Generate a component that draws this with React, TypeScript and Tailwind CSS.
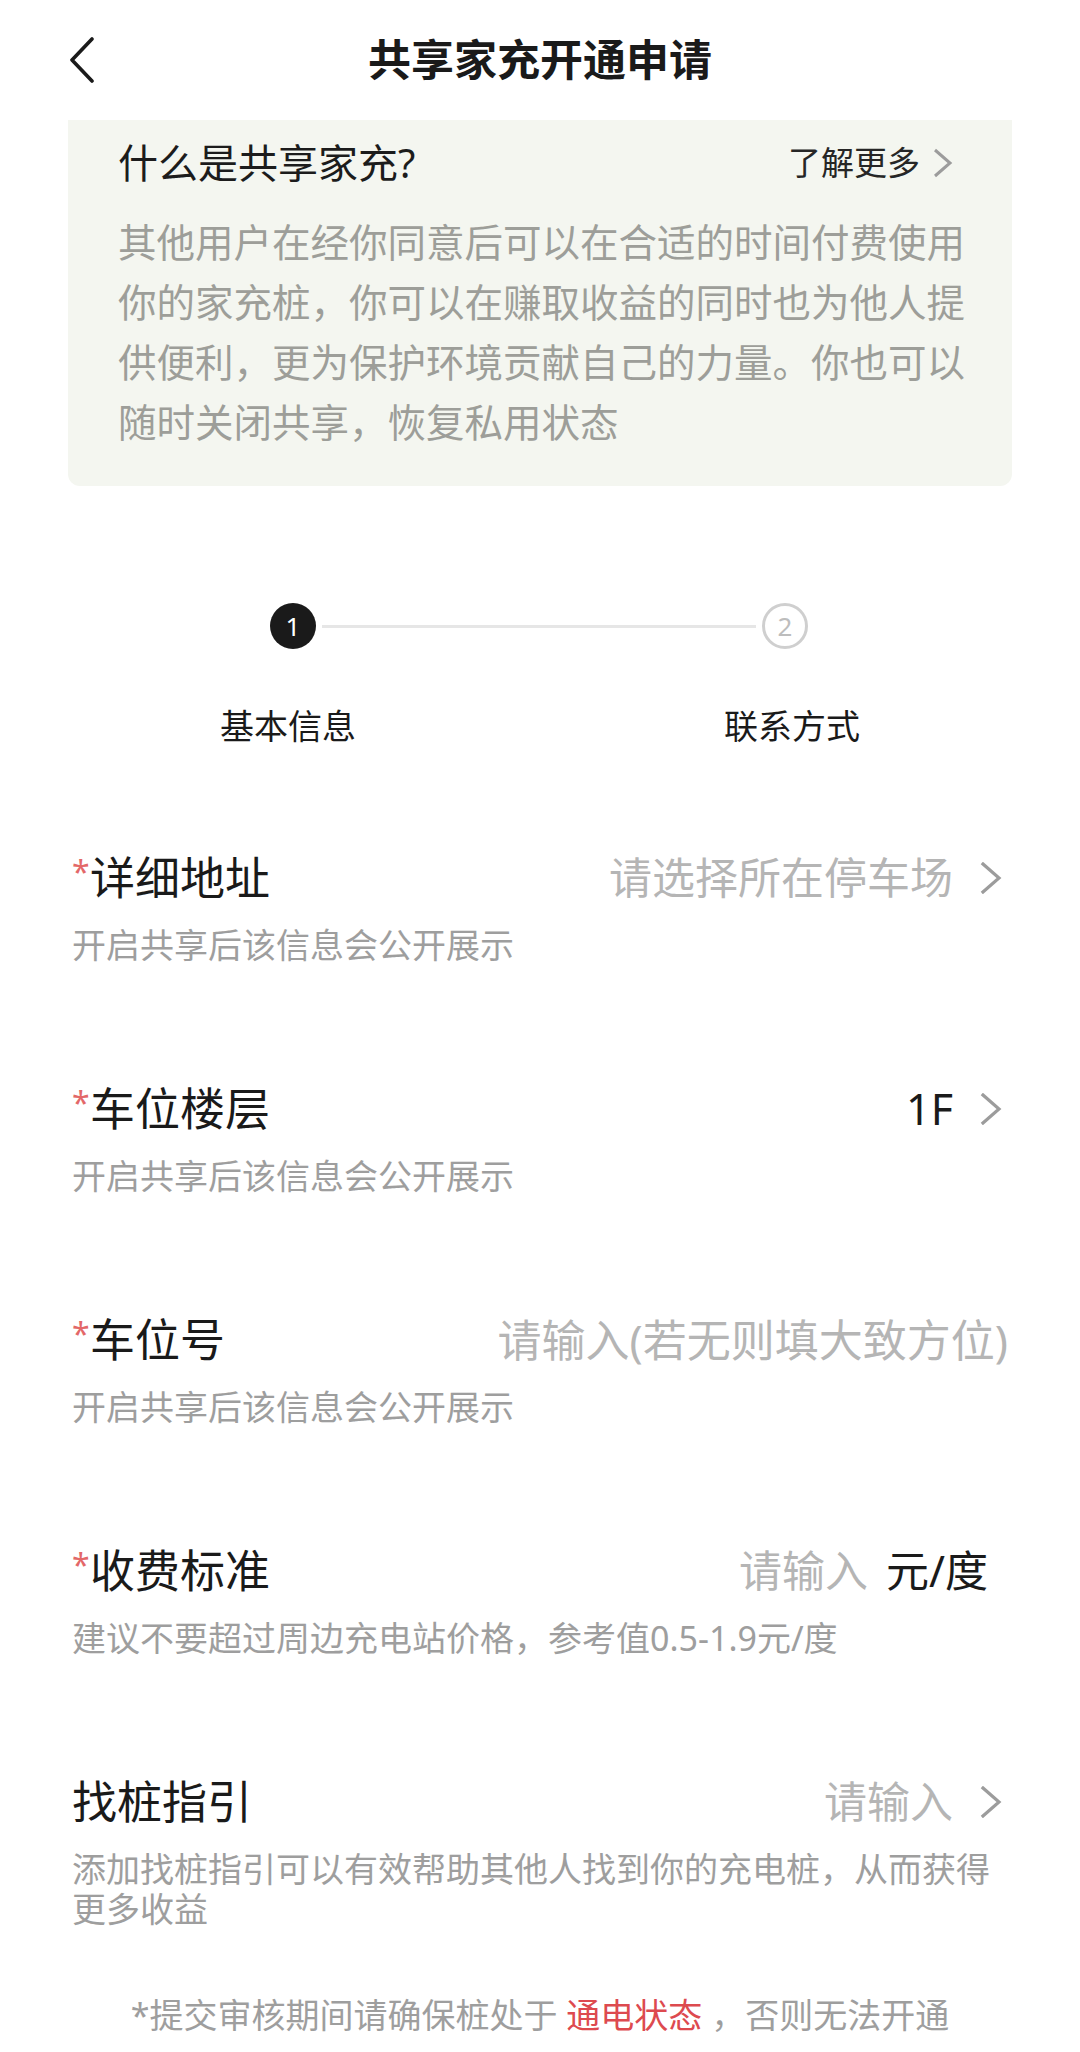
import React from 'react';

const FONT = "font-['Noto_Sans','Noto_Sans_CJK_SC',sans-serif]";

function Chevron({ color = '#9c9c9c', className = '' }: { color?: string; className?: string }) {
  return (
    <svg width="28" height="32" viewBox="0 0 28 32" className={className} fill="none">
      <path d="M3 2 L19 16 L3 30" stroke={color} strokeWidth="3.2" strokeLinecap="square" strokeLinejoin="miter" />
    </svg>
  );
}

interface FieldRowProps {
  label: string;
  required?: boolean;
  hint: React.ReactNode;
  right: React.ReactNode;
}

function FieldRow({ label, required = true, hint, right }: FieldRowProps) {
  return (
    <div className="px-[72px]">
      <div className="flex h-[60px] items-center justify-between">
        <div className="flex items-start">
          {required && (
            <span className="mt-[8px] w-[18px] text-[32px] leading-none text-[#e36868]">*</span>
          )}
          <span className="text-[45px] leading-[60px] text-[#1a1a1a]">{label}</span>
        </div>
        <div className="flex items-center">{right}</div>
      </div>
      <div className="mt-[17px] text-[34px] leading-[40px] text-[#9e9e9e]">{hint}</div>
    </div>
  );
}

const PUBLIC_HINT = '开启共享后该信息会公开展示';

export default function App() {
  return (
    <div className={`${FONT} min-h-[2052px] w-[1080px] overflow-hidden bg-white`}>
      {/* header */}
      <div className="grid h-[120px] grid-cols-[1fr_auto_1fr] items-center px-[68px]">
        <svg width="28" height="46" viewBox="0 0 28 46" fill="none">
          <path d="M24 2 L4 23 L24 44" stroke="#1a1a1a" strokeWidth="3.6" strokeLinecap="round" strokeLinejoin="round" />
        </svg>
        <h1 className="text-[43px] font-bold leading-[60px] text-[#1a1a1a]">共享家充开通申请</h1>
        <div />
      </div>

      {/* intro card */}
      <div className="mx-[68px] rounded-b-[12px] bg-[#f4f6f0] pb-[34px] pl-[50px] pr-[40px] pt-[15px]">
        <div className="flex h-[56px] items-center justify-between pr-[19px]">
          <span className="text-[40px] text-[#1c1c1c]">什么是共享家充?</span>
          <div className="flex items-center">
            <span className="text-[33px] text-[#262626]">了解更多</span>
            <svg width="20" height="30" viewBox="0 0 20 30" fill="none" className="ml-[13px]">
              <path d="M2 2 L17 15 L2 28" stroke="#9c9c9c" strokeWidth="3" />
            </svg>
          </div>
        </div>
        <p className="mt-[21px] text-[38.5px] leading-[60px] text-[#9d9e99]">
          其他用户在经你同意后可以在合适的时间付费使用你的家充桩，你可以在赚取收益的同时也为他人提供便利，更为保护环境贡献自己的力量。你也可以随时关闭共享，恢复私用状态
        </p>
      </div>

      {/* steps */}
      <div className="mt-[117px] flex items-center pl-[270px] pr-[272px]">
        <div className="flex h-[46px] w-[46px] items-center justify-center rounded-full bg-[#1a1a1a] text-[26px] text-white">
          1
        </div>
        <div className="mx-[6px] h-[3px] flex-1 bg-[#e6e6e6]" />
        <div className="flex h-[46px] w-[46px] items-center justify-center rounded-full border-[3px] border-[#cfcfcf] text-[26px] text-[#bdbdbd]">
          2
        </div>
      </div>
      <div className="mt-[53px] flex justify-between px-[220px] text-[34px] leading-[48px] text-[#1a1a1a]">
        <span>基本信息</span>
        <span>联系方式</span>
      </div>

      {/* form */}
      <div className="mt-[98px] flex flex-col gap-[114px]">
        <FieldRow
          label="详细地址"
          hint={PUBLIC_HINT}
          right={
            <>
              <span className="text-[43px] text-[#b5b5b5]">请选择所在停车场</span>
              <Chevron className="ml-[27px]" />
            </>
          }
        />
        <FieldRow
          label="车位楼层"
          hint={PUBLIC_HINT}
          right={
            <>
              <span className="text-[43px] text-[#1a1a1a]">1F</span>
              <Chevron className="ml-[27px]" />
            </>
          }
        />
        <FieldRow
          label="车位号"
          hint={PUBLIC_HINT}
          right={<span className="text-[44px] text-[#b5b5b5]">请输入(若无则填大致方位)</span>}
        />
        <FieldRow
          label="收费标准"
          hint="建议不要超过周边充电站价格，参考值0.5-1.9元/度"
          right={
            <div className="flex items-center pr-[20px]">
              <span className="text-[43px] text-[#b5b5b5]">请输入</span>
              <span className="ml-[18px] text-[43px] text-[#1a1a1a]">元/度</span>
            </div>
          }
        />
        <FieldRow
          label="找桩指引"
          required={false}
          hint={
            <>
              添加找桩指引可以有效帮助其他人找到你的充电桩，从而获得
              <br />
              更多收益
            </>
          }
          right={
            <>
              <span className="text-[43px] text-[#b5b5b5]">请输入</span>
              <Chevron className="ml-[27px]" />
            </>
          }
        />
      </div>

      {/* footer note */}
      <p className="mt-[62px] text-center text-[34px] leading-[48px] text-[#9e9e9e]">
        *提交审核期间请确保桩处于 <span className="text-[#dd4a4f]">通电状态</span> ，否则无法开通
      </p>
    </div>
  );
}
